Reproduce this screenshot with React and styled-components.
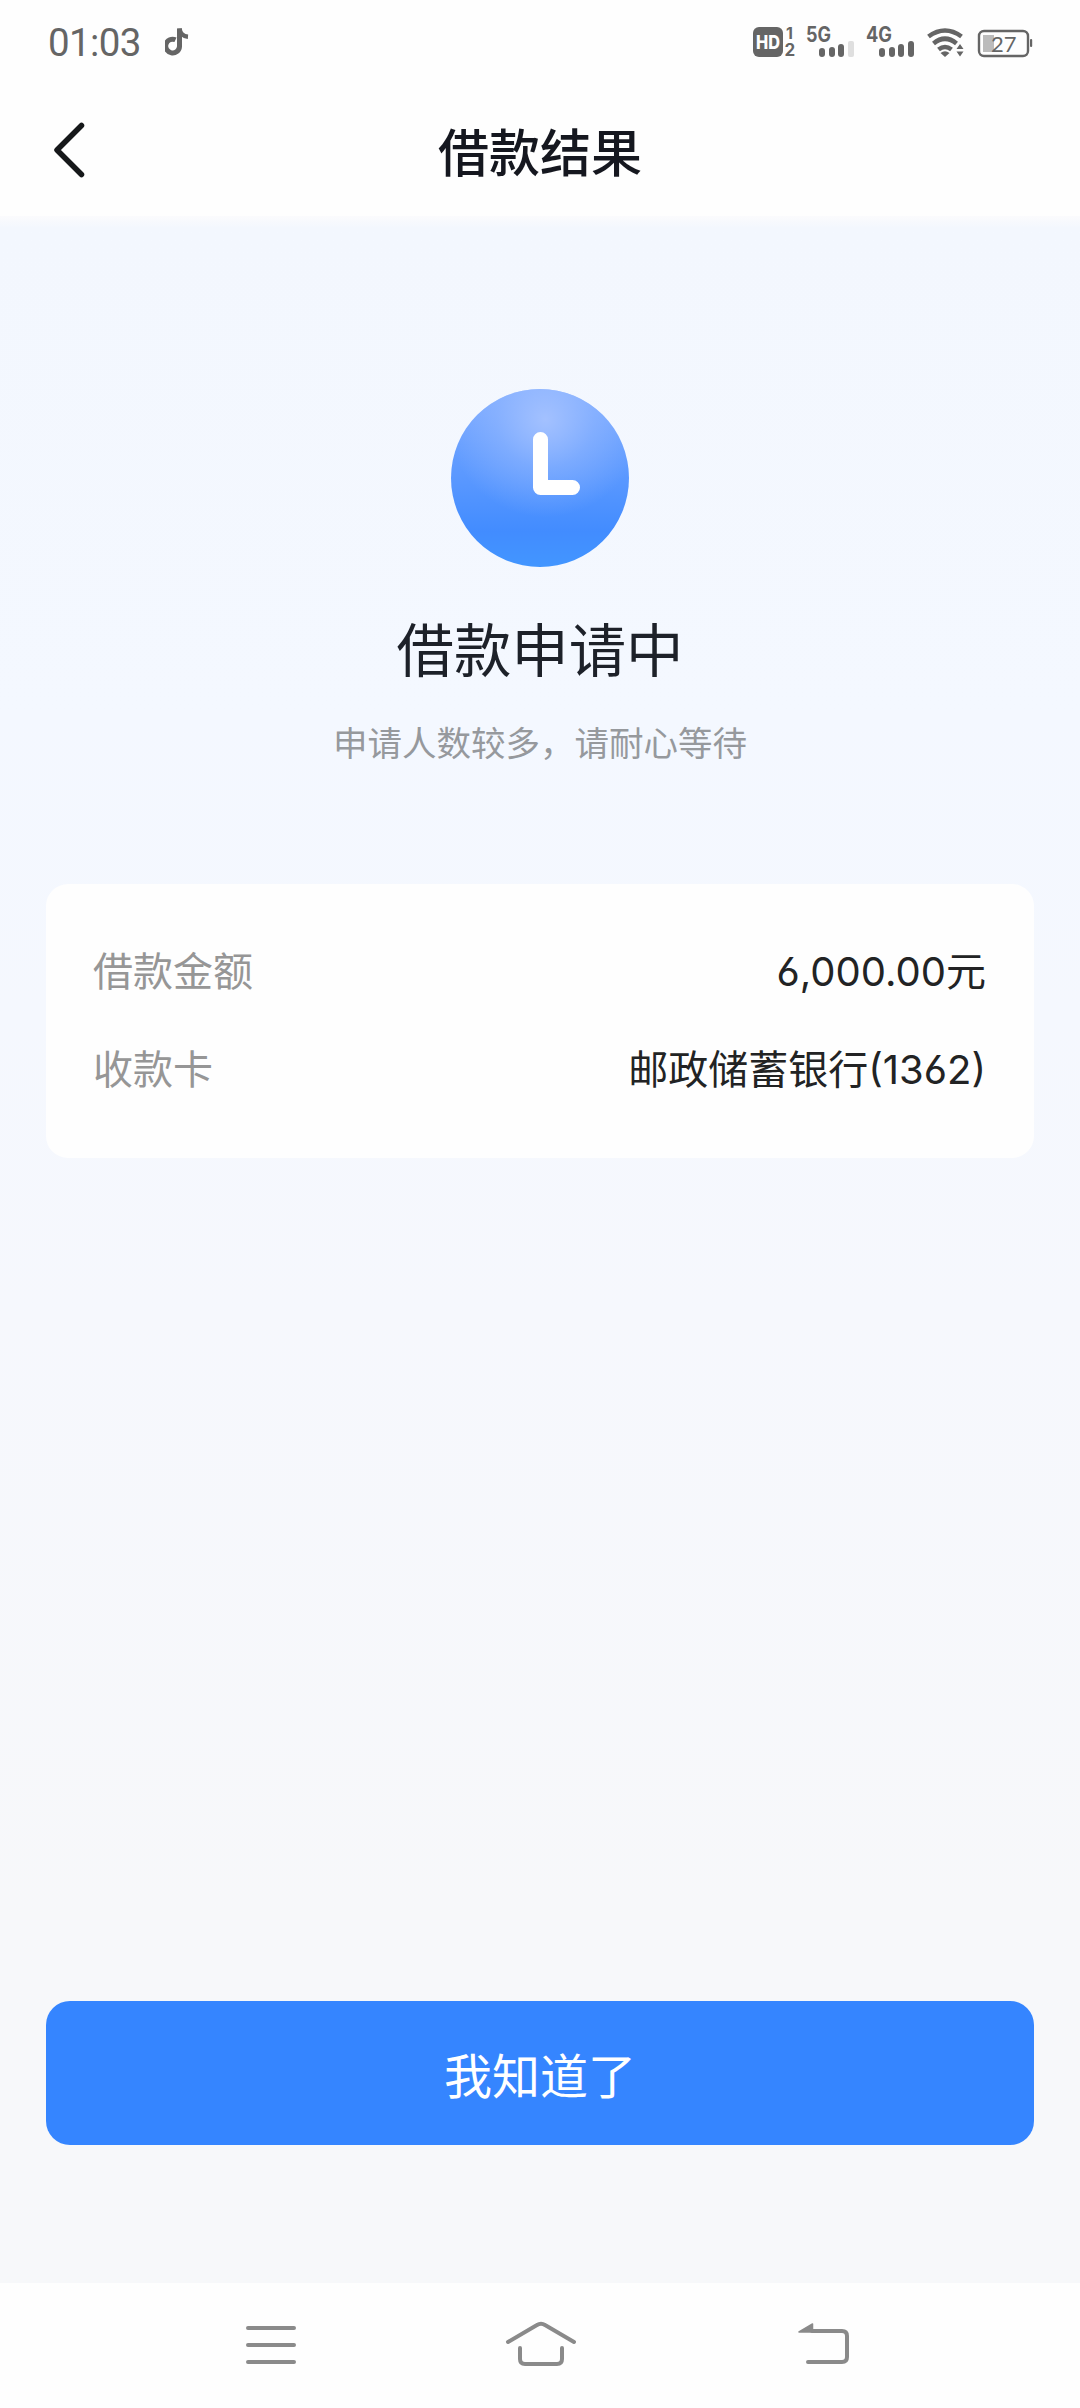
import React from "react"
import styled, { createGlobalStyle } from "styled-components"

const GlobalStyle = createGlobalStyle`
    * {
        box-sizing: border-box;
    }

    body {
        margin: 0;
        font-family: Inter, "Noto Sans CJK SC", sans-serif;
        background: #fefefe;
    }
`

const Screen = styled.div`
    display: flex;
    flex-direction: column;
    width: 1080px;
    height: 2408px;
    overflow: hidden;
`

const StatusBar = styled.div`
    display: flex;
    justify-content: space-between;
    height: 84px;
    padding: 0 46px 0 48px;
    color: #656565;
`

const StatusLeft = styled.div`
    display: flex;
    align-items: center;
    gap: 24px;
`

const Time = styled.span`
    padding-top: 1px;
    font-family: Roboto, sans-serif;
    font-size: 38.5px;
    line-height: 84px;
    letter-spacing: -0.6px;
`

const Header = styled.header`
    display: grid;
    grid-template-columns: 140px 1fr 140px;
    align-items: center;
    height: 132px;
`

const BackButton = styled.button`
    display: flex;
    width: 140px;
    padding: 0 0 0 50px;
    border: 0;
    background: none;
    color: #16181a;
`

const HeaderTitle = styled.h1`
    margin: 0;
    padding-top: 7px;
    font-size: 51px;
    font-weight: 500;
    line-height: 72px;
    text-align: center;
    color: #15171f;
`

const Content = styled.main`
    display: flex;
    flex: 1;
    flex-direction: column;
    padding: 172px 46px 138px;
    background: linear-gradient(#fbfbfd 0, #f3f7fe 12px, #f4f8ff 500px, #f6f8fd 1100px, #f7f8fa 1700px, #f7f8fa 100%);
`

const Result = styled.section`
    display: flex;
    flex-direction: column;
    align-items: center;
`

const ResultTitle = styled.h2`
    margin: 43px 0 0;
    font-size: 57.4px;
    font-weight: 400;
    line-height: 80px;
    color: #1d2129;
`

const ResultHint = styled.p`
    margin: 29px 0 0;
    font-size: 34.5px;
    line-height: 48px;
    color: #96999d;
`

const Card = styled.section`
    display: flex;
    flex-direction: column;
    gap: 42px;
    height: 274px;
    margin-top: 116px;
    padding: 60px 48px 0 47px;
    border-radius: 22px;
    background: #fefefe;
`

const CardRow = styled.div`
    display: flex;
    justify-content: space-between;
    font-size: 40px;
    line-height: 56px;
`

const RowLabel = styled.span`
    color: #969696;
`

const RowValue = styled.span`
    color: #222324;
    font-feature-settings: "cv03";
`

const ConfirmButton = styled.button`
    height: 144px;
    margin-top: auto;
    border: 0;
    border-radius: 24px;
    background: #3585ff;
    font-family: inherit;
    font-size: 48px;
    color: #fff;
`

const NavBar = styled.nav`
    display: flex;
    justify-content: space-between;
    height: 125px;
    padding: 35px 226px 0 241px;
    background: #fefefe;
`

const NavIcon = styled.svg`
    width: 80px;
    height: 54px;
    fill: none;
    stroke: #8a8a8a;
    stroke-width: 4;
    stroke-linecap: round;
    stroke-linejoin: round;
`

const SvgLabel = styled.text`
    font-family: ${props => props.$family || "Inter"}, sans-serif;
    font-size: ${props => props.$size}px;
    font-weight: ${props => props.$weight || 700};
`

const StatusIcons = () => {
    return (
        <svg width="284" height="84" viewBox="750 0 284 84" fill="currentColor">
            <rect x="753" y="27" width="30" height="30" rx="6"/>
            <SvgLabel x="756" y="48.800" $size={18.5} $weight={800} textLength="24" lengthAdjust="spacingAndGlyphs" fill="#fff">HD</SvgLabel>
            <SvgLabel x="786" y="39" $size={16}>1</SvgLabel>
            <SvgLabel x="784.500" y="56.300" $size={17}>2</SvgLabel>

            <SvgLabel x="806" y="42.300" $size={21} textLength="25" lengthAdjust="spacingAndGlyphs">5G</SvgLabel>
            <rect x="819" y="48" width="6" height="9" rx="3"/>
            <rect x="829" y="47" width="6" height="10" rx="3"/>
            <rect x="838" y="44" width="6" height="13" rx="3"/>
            <rect x="848" y="41" width="6" height="16" rx="2" opacity="0.2"/>

            <SvgLabel x="866" y="42.300" $size={21} textLength="26" lengthAdjust="spacingAndGlyphs">4G</SvgLabel>
            <rect x="879" y="48" width="6" height="9" rx="3"/>
            <rect x="889" y="47" width="6" height="10" rx="3"/>
            <rect x="898" y="44" width="6" height="13" rx="3"/>
            <rect x="908" y="41" width="6" height="16" rx="3"/>

            <g fill="none" stroke="currentColor" strokeWidth="4.6">
                <path d="M928.500 36.500Q945 24.500 961.500 36.500"/>
                <path d="M933.500 43.500Q945 34 956.500 43.500"/>
                <path d="M938.500 49.500Q945 44.500 951.500 49.500"/>
            </g>
            <path d="M940.500 53Q945 49.500 949.500 53L945 57zM956.500 49L960 44l3.500 5zM956.500 51.500L960 56.500l3.500-5z"/>

            <rect x="979" y="31" width="49" height="25" rx="5" fill="none" stroke="currentColor" strokeWidth="2.400"/>
            <rect x="983" y="35" width="11" height="17" fill="#bbb"/>
            <rect x="1030" y="39" width="2.200" height="8" rx="1"/>
            <SvgLabel x="991" y="51.500" $size={22} $weight={400} $family="Lato">27</SvgLabel>
        </svg>
    )
}

const ClockIcon = () => {
    return (
        <svg width="180" height="180" viewBox="0 0 180 180">
            <defs>
                <linearGradient id="clockBase" x1="0" y1="0" x2="0" y2="1">
                    <stop offset="0" stopColor="#7caaff"/>
                    <stop offset="0.5" stopColor="#5a98ff"/>
                    <stop offset="0.8" stopColor="#428cff"/>
                    <stop offset="1" stopColor="#4296ff"/>
                </linearGradient>
                <radialGradient id="clockGlow" cx="0.53" cy="0.17" r="0.55">
                    <stop offset="0" stopColor="#a3c1ff"/>
                    <stop offset="0.5" stopColor="#a3c1ff" stopOpacity="0.4"/>
                    <stop offset="1" stopColor="#a3c1ff" stopOpacity="0"/>
                </radialGradient>
            </defs>
            <circle cx="90" cy="90" r="89" fill="url(#clockBase)"/>
            <circle cx="90" cy="90" r="89" fill="url(#clockGlow)"/>
            <path d="M90.500 51.500V99.500H122.500" fill="none" stroke="#fff" strokeWidth="15" strokeLinecap="round" strokeLinejoin="round"/>
        </svg>
    )
}

const App = () => {
    return (
        <>
            <GlobalStyle/>
            <Screen>
                <StatusBar>
                    <StatusLeft>
                        <Time>01:03</Time>
                        <svg width="24" height="28" viewBox="0 0 24 28" fill="none" stroke="currentColor" strokeWidth="5">
                            <path d="M10.500 11.800A6.900 6.900 0 1 0 14.500 18.500V0.500"/>
                            <path d="M14.500 0.500C15 5.500 18.500 8.500 23 8.800" strokeWidth="4.500"/>
                        </svg>
                    </StatusLeft>
                    <StatusIcons/>
                </StatusBar>
                <Header>
                    <BackButton>
                        <svg width="36" height="60" viewBox="0 0 36 60" fill="none" stroke="currentColor" strokeWidth="5.500" strokeLinecap="round" strokeLinejoin="round">
                            <path d="M31.500 5.500L7 30L31.500 54.500"/>
                        </svg>
                    </BackButton>
                    <HeaderTitle>借款结果</HeaderTitle>
                </Header>
                <Content>
                    <Result>
                        <ClockIcon/>
                        <ResultTitle>借款申请中</ResultTitle>
                        <ResultHint>申请人数较多，请耐心等待</ResultHint>
                    </Result>
                    <Card>
                        <CardRow>
                            <RowLabel>借款金额</RowLabel>
                            <RowValue>6,000.00元</RowValue>
                        </CardRow>
                        <CardRow>
                            <RowLabel>收款卡</RowLabel>
                            <RowValue>邮政储蓄银行(1362)</RowValue>
                        </CardRow>
                    </Card>
                    <ConfirmButton>我知道了</ConfirmButton>
                </Content>
                <NavBar>
                    <NavIcon viewBox="241 2318 80 54">
                        <path d="M248 2328H294M248 2345H294M248 2362H294"/>
                    </NavIcon>
                    <NavIcon viewBox="508 2318 80 54" overflow="visible">
                        <path d="M508 2342L537 2325Q541 2322.500 545 2325L574 2342"/>
                        <path d="M520 2348V2359Q520 2364 525 2364H557Q562 2364 562 2359V2348"/>
                    </NavIcon>
                    <NavIcon viewBox="774 2318 80 54">
                        <path d="M812 2331H842Q847 2331 847 2336V2357Q847 2362 842 2362H808"/>
                        <path d="M799 2332L812.500 2324V2332z" fill="#8a8a8a" strokeWidth="1.500"/>
                    </NavIcon>
                </NavBar>
            </Screen>
        </>
    )
}

export default App;
